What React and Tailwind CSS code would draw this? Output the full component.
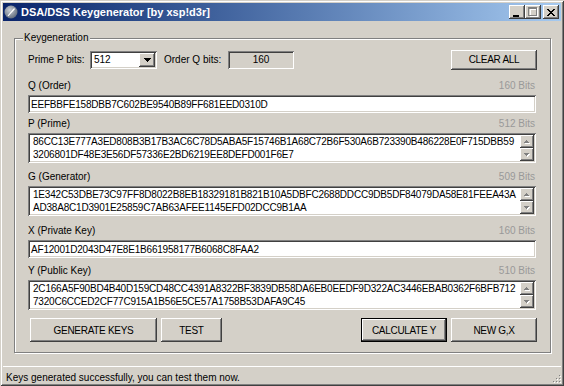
import React from "react";

const raised =
  "shadow-[inset_-1px_-1px_0_#404040,inset_1px_1px_0_#ffffff,inset_-2px_-2px_0_#808080,inset_2px_2px_0_#d4d0c8]";
const sunken =
  "shadow-[inset_1px_1px_0_#808080,inset_-1px_-1px_0_#ffffff,inset_2px_2px_0_#404040,inset_-2px_-2px_0_#d4d0c8]";

// pixel glyphs for the classic controls
const Px = ({ w, h, cells, color, shadow }) => (
  <svg width={w} height={h} shapeRendering="crispEdges">
    {shadow &&
      cells.map(([x, y, cw], i) => <rect key={"s" + i} x={x + 1} y={y + 1} width={cw} height={1} fill={shadow} />)}
    {cells.map(([x, y, cw], i) => (
      <rect key={i} x={x} y={y} width={cw} height={1} fill={color} />
    ))}
  </svg>
);

const upCells = [[2, 0, 1], [1, 1, 3], [0, 2, 5]];
const downCells = [[0, 0, 5], [1, 1, 3], [2, 2, 1]];

const ScrollBtn = ({ up }) => (
  <div className={`flex h-[13px] w-[14px] items-center justify-center bg-[#d4d0c8] ${raised}`}>
    <Px w={6} h={4} cells={up ? upCells : downCells} color="#808080" shadow="#ffffff" />
  </div>
);

const Button = ({ children, className = "", isDefault }) => (
  <div
    className={`flex items-center justify-center bg-[#d4d0c8] tracking-[-0.3px] ${raised} ${
      isDefault ? "border border-black" : ""
    } ${className}`}
  >
    {children}
  </div>
);

const Field = ({ label, bits, lines, multi, className = "" }) => (
  <div className={`w-[508px] ${className}`}>
    <div className="flex h-[13px] items-center justify-between leading-[13px]">
      <span>{label}</span>
      <span className="mr-[1px] text-[#999999]">{bits} Bits</span>
    </div>
    {multi ? (
      <div className={`mt-[3px] flex h-[30px] bg-white p-[2px] ${sunken}`}>
        <div className="flex-1 overflow-hidden whitespace-nowrap pl-[3px] leading-[13px] tracking-[-0.2px]">
          {lines.map((l) => (
            <div key={l}>{l}</div>
          ))}
        </div>
        <div className="flex w-[14px] flex-col">
          <ScrollBtn up />
          <ScrollBtn />
        </div>
      </div>
    ) : (
      <div className={`mt-[3px] flex h-[18px] items-center bg-white pl-[3px] tracking-[-0.2px] ${sunken}`}>
        {lines[0]}
      </div>
    )}
  </div>
);

const TitleBtn = ({ children }) => (
  <div className={`flex h-[14px] w-[16px] items-center justify-center bg-[#d4d0c8] ${raised}`}>{children}</div>
);

export default function App() {
  return (
    <div className="relative flex h-[386px] w-[564px] flex-col bg-[#d4d0c8] px-[3px] pt-[3px] font-['Liberation_Sans',Arial,sans-serif] text-[10px] text-black shadow-[inset_1px_1px_0_#d4d0c8,inset_-1px_-1px_0_#404040,inset_2px_2px_0_#ffffff,inset_-2px_-2px_0_#808080]">
      {/* title bar */}
      <div className="flex h-[18px] items-center bg-linear-to-r from-[#0a246a] to-[#a6caf0] pl-[1px]">
        <svg width="14" height="14" viewBox="0 0 14 14">
          <defs>
            <radialGradient id="ic" cx="0.4" cy="0.35" r="0.7">
              <stop offset="0" stopColor="#c9ced6" />
              <stop offset="1" stopColor="#5d6878" />
            </radialGradient>
          </defs>
          <circle cx="7" cy="7" r="6.5" fill="url(#ic)" />
          <path d="M3.5 10.8 L9.6 3.6 Q11.2 2.6 10.6 4.4 L4.4 11.2 Z" fill="#ffffff" />
        </svg>
        <span className="ml-[3px] text-[11px] font-bold text-white">DSA/DSS Keygenerator [by xsp!d3r]</span>
        <div className="ml-auto flex items-center pr-[2px]">
          <TitleBtn>
            <svg width="8" height="9" shapeRendering="crispEdges">
              <rect x="0" y="7" width="6" height="2" fill="#000" />
            </svg>
          </TitleBtn>
          <TitleBtn>
            <svg width="10" height="10" shapeRendering="crispEdges">
              <path d="M1 1h8v1H1zM1 3h1v6H1zM8 3h1v6H8zM1 9h9v1H1zM1 1h9v2H1z" fill="#ffffff" transform="translate(0.5 0)" />
              <path d="M0 0h9v2H0zM0 2h1v7H0zM8 2h1v7H8zM0 8h9v1H0z" fill="#808080" />
            </svg>
          </TitleBtn>
          <div className="ml-[2px]">
            <TitleBtn>
              <Px
                w={8}
                h={7}
                color="#000"
                cells={[
                  [0, 0, 2], [6, 0, 2],
                  [1, 1, 2], [5, 1, 2],
                  [2, 2, 4],
                  [3, 3, 2],
                  [2, 4, 4],
                  [1, 5, 2], [5, 5, 2],
                  [0, 6, 2], [6, 6, 2],
                ]}
              />
            </TitleBtn>
          </div>
        </div>
      </div>

      {/* group box */}
      <div className="relative ml-[11px] mt-[17px] h-[315px] w-[537px] border border-[#808080] pl-[13px] pt-[11px] shadow-[inset_1px_1px_0_#ffffff,1px_1px_0_#ffffff]">
        <span className="absolute left-[8px] top-[-8px] bg-[#d4d0c8] px-[1px] leading-[13px]">Keygeneration</span>

        <div className="flex h-[19px] w-[508px] items-center">
          <span className="w-[62px]">Prime P bits:</span>
          <div className={`flex h-[18px] w-[67px] items-center bg-white p-[2px] ${sunken}`}>
            <span className="flex-1 pl-[2px]">512</span>
            <div className={`flex h-[14px] w-[16px] items-center justify-center bg-[#d4d0c8] ${raised}`}>
              <Px w={7} h={4} color="#000" cells={[[0, 0, 7], [1, 1, 5], [2, 2, 3], [3, 3, 1]]} />
            </div>
          </div>
          <span className="ml-[7px] w-[64px]">Order Q bits:</span>
          <div className={`flex h-[18px] w-[66px] items-center justify-center ${sunken}`}>160</div>
          <Button className="-mr-[1px] ml-auto h-[20px] w-[86px]">CLEAR ALL</Button>
        </div>

        <Field className="mt-[10px]" label="Q (Order)" bits="160" lines={["EEFBBFE158DBB7C602BE9540B89FF681EED0310D"]} />
        <Field
          className="mt-[4px]"
          multi
          label="P (Prime)"
          bits="512"
          lines={[
            "86CC13E777A3ED808B3B17B3AC6C78D5ABA5F15746B1A68C72B6F530A6B723390B486228E0F715DBB59",
            "3206801DF48E3E56DF57336E2BD6219EE8DEFD001F6E7",
          ]}
        />
        <Field
          className="mt-[7px]"
          multi
          label="G (Generator)"
          bits="509"
          lines={[
            "1E342C53DBE73C97FF8D8022B8EB18329181B821B10A5DBFC2688DDCC9DB5DF84079DA58E81FEEA43A",
            "AD38A8C1D3901E25859C7AB63AFEE1145EFD02DCC9B1AA",
          ]}
        />
        <Field className="mt-[8px]" label="X (Private Key)" bits="160" lines={["AF12001D2043D47E8E1B661958177B6068C8FAA2"]} />
        <Field
          className="mt-[6px]"
          multi
          label="Y (Public Key)"
          bits="510"
          lines={[
            "2C166A5F90BD4B40D159CD48CC4391A8322BF3839DB58DA6EB0EEDF9D322AC3446EBAB0362F6BFB712",
            "7320C6CCED2CF77C915A1B56E5CE57A1758B53DAFA9C45",
          ]}
        />

        <div className="mt-[8px] flex h-[24px] w-[508px]">
          <Button className="ml-[2px] w-[127px]">GENERATE KEYS</Button>
          <Button className="ml-[4px] w-[61px]">TEST</Button>
          <Button isDefault className="ml-auto w-[86px]">CALCULATE Y</Button>
          <Button className="-mr-[1px] ml-[4px] w-[86px]">NEW G,X</Button>
        </div>
      </div>

      {/* status bar */}
      <div className="mt-auto flex h-[20px] border-t border-white pl-[3px] pt-[6px] leading-[10px]">
        <span>Keys generated successfully, you can test them now.</span>
        <svg className="ml-auto mt-[2px]" width="10" height="10" shapeRendering="crispEdges">
          {[
            [8, 0], [5, 3], [8, 3], [2, 6], [5, 6], [8, 6],
          ].map(([x, y], i) => (
            <g key={i}>
              <rect x={x + 1} y={y + 1} width="1" height="1" fill="#ffffff" />
              <rect x={x} y={y} width="1" height="1" fill="#808080" />
            </g>
          ))}
        </svg>
      </div>
    </div>
  );
}
